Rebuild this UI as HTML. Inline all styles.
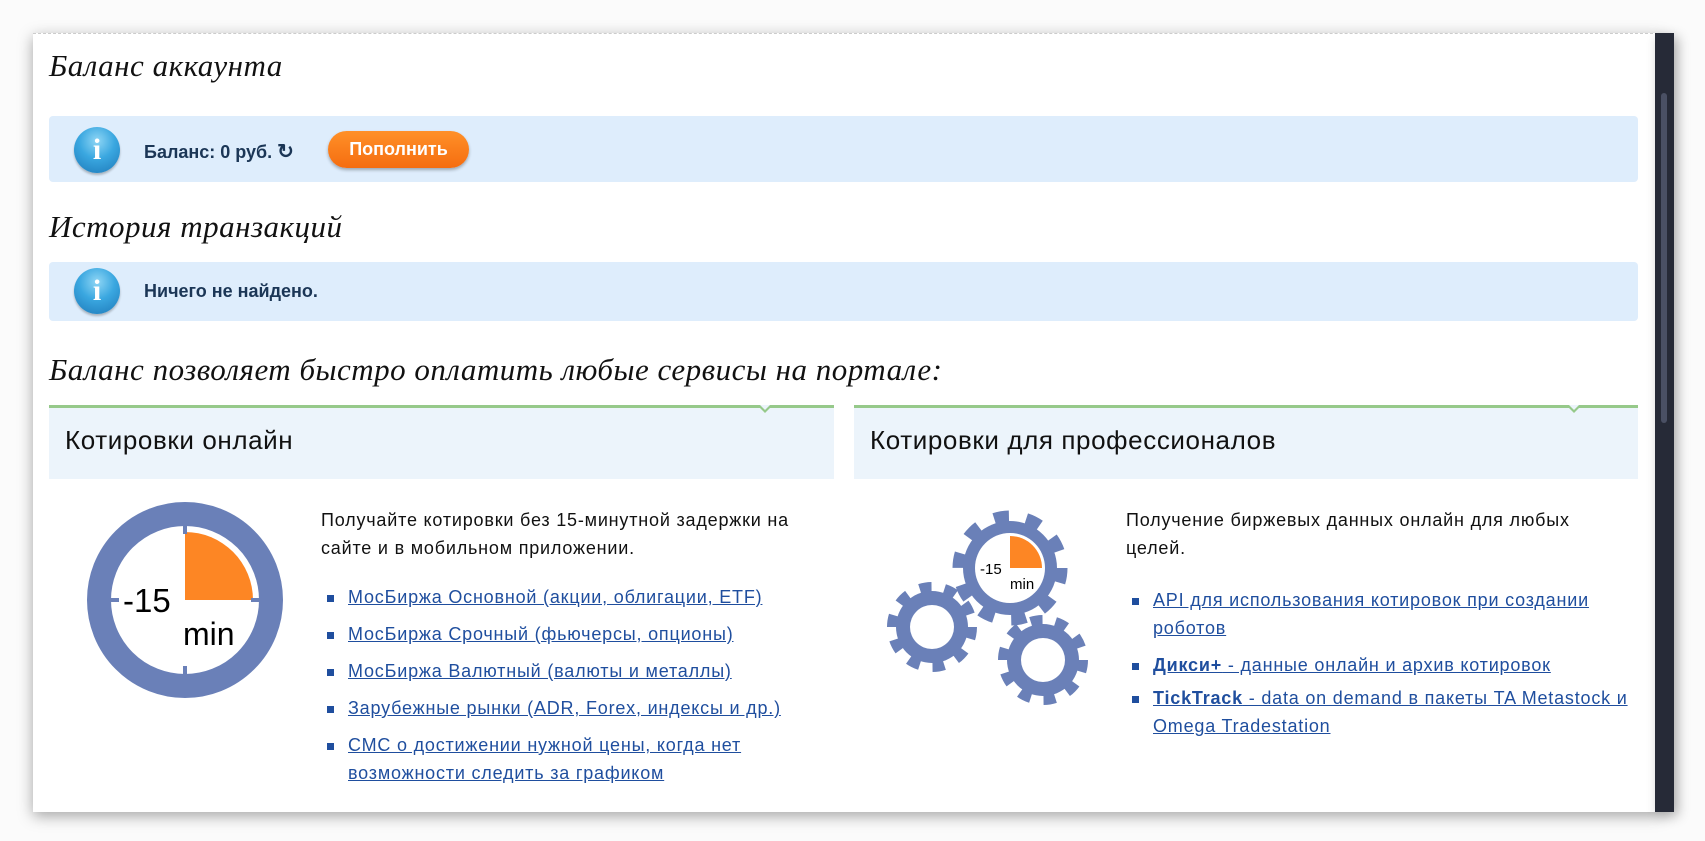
<!DOCTYPE html>
<html><head><meta charset="utf-8"><style>
*{margin:0;padding:0;box-sizing:border-box}
body{width:1705px;height:841px;background:#fbfbfb;position:relative;overflow:hidden;font-family:"Liberation Sans",sans-serif}
.card{position:absolute;left:33px;top:33px;width:1630px;height:779px;background:#fff;box-shadow:0 4px 14px rgba(0,0,0,.35);border-top:1px dashed #ccc}
.sb{position:absolute;left:1655px;top:33px;width:19px;height:779px;background:#262a37;box-shadow:4px 4px 12px rgba(0,0,0,.3)}
.thumb{position:absolute;left:6px;top:60px;width:6px;height:330px;background:#4a5064;border-radius:3px}
.h{position:absolute;font-family:"Liberation Serif",serif;font-style:italic;font-size:31px;letter-spacing:0.5px;color:#111;left:49px}
.info{position:absolute;left:49px;width:1589px;background:#deedfc;border-radius:4px}
.ic{position:absolute;left:25px;width:46px;height:46px;border-radius:50%;background:radial-gradient(circle at 50% 30%,#8fd6f5 0%,#3aa7e0 45%,#1d78b8 100%);box-shadow:0 2px 2px rgba(0,0,0,.25);color:#fff;font:bold 30px "Liberation Serif",serif;text-align:center;line-height:46px}
.it{position:absolute;left:95px;font-weight:bold;font-size:18px;color:#1b3656}
.btn{position:absolute;left:328px;top:131px;width:141px;height:37px;border-radius:19px;background:linear-gradient(#ff9028,#f56d10);color:#fff;font-weight:bold;font-size:18px;text-align:center;line-height:36px;box-shadow:0 2px 3px rgba(0,0,0,.3)}
.ph{position:absolute;top:405px;height:74px;background:#ecf4fb;border-top:3px solid #96c98a}
.ph span{position:absolute;left:16px;top:17px;font-size:26px;letter-spacing:0.6px;color:#111}
.chev{position:absolute;top:-3px;width:16px;height:10px}
.txt{position:absolute;font-size:18px;letter-spacing:0.8px;line-height:28px;color:#111}
ul{list-style:none;position:absolute;font-size:18px;letter-spacing:0.8px;line-height:28px}
li{position:relative;padding-left:27px;margin-bottom:9px}
li:before{content:"";position:absolute;left:6px;top:12px;width:7px;height:7px;background:#1f4e9e}
a{color:#1f4e9e;text-decoration:underline}
</style></head><body>
<div class="card"></div>
<div class="sb"><div class="thumb"></div></div>
<div class="h" style="top:48px">Баланс аккаунта</div>
<div class="info" style="top:116px;height:66px"><div class="ic" style="top:11px">i</div><div class="it" style="top:23px">Баланс: 0 руб. <span style="font-size:20px">↻</span></div></div>
<div class="btn">Пополнить</div>
<div class="h" style="top:209px">История транзакций</div>
<div class="info" style="top:262px;height:59px"><div class="ic" style="top:6px">i</div><div class="it" style="top:19px">Ничего не найдено.</div></div>
<div class="h" style="top:352px">Баланс позволяет быстро оплатить любые сервисы на портале:</div>

<div class="ph" style="left:49px;width:785px"><span>Котировки онлайн</span>
<svg class="chev" style="left:708px" viewBox="0 0 16 10"><path d="M0 0 L8 8 L16 0 Z" fill="#96c98a"/><path d="M3 0 L8 5 L13 0Z" fill="#ecf4fb"/></svg></div>
<div class="ph" style="left:854px;width:784px"><span>Котировки для профессионалов</span>
<svg class="chev" style="left:712px" viewBox="0 0 16 10"><path d="M0 0 L8 8 L16 0 Z" fill="#96c98a"/><path d="M3 0 L8 5 L13 0Z" fill="#ecf4fb"/></svg></div>

<svg style="position:absolute;left:78px;top:495px" width="215" height="215" viewBox="0 0 215 215">
<g transform="translate(107,105)">
<circle r="86" fill="none" stroke="#6a80b8" stroke-width="24"/>
<path d="M0 0 V-68 A68 68 0 0 1 68 0 Z" fill="#fd8624"/>
<path d="M58 -52 h12 v-10 h-12z" fill="#6a80b8"/>
<rect x="-2" y="-76" width="4" height="10" fill="#6a80b8"/><rect x="-2" y="66" width="4" height="10" fill="#6a80b8"/>
<rect x="-76" y="-2" width="10" height="4" fill="#6a80b8"/><rect x="66" y="-2" width="10" height="4" fill="#6a80b8"/>
<text x="-62" y="12" font-family="Liberation Sans" font-size="33" fill="#000">-15</text>
<text x="-2" y="45" font-family="Liberation Sans" font-size="32" fill="#000">min</text>
</g></svg>

<div class="txt" style="left:321px;top:506px">Получайте котировки без 15-минутной задержки на<br>сайте и в мобильном приложении.</div>
<ul style="left:321px;top:583px;width:480px">
<li><a>МосБиржа Основной (акции, облигации, ETF)</a></li>
<li><a>МосБиржа Срочный (фьючерсы, опционы)</a></li>
<li><a>МосБиржа Валютный (валюты и металлы)</a></li>
<li><a>Зарубежные рынки (ADR, Forex, индексы и др.)</a></li>
<li><a>СМС о достижении нужной цены, когда нет возможности следить за графиком</a></li>
</ul>

<svg style="position:absolute;left:880px;top:490px" width="230" height="230" viewBox="0 0 230 230">
<g fill="#6a80b8" stroke="#6a80b8">
<g transform="translate(130,78)"><circle r="47" stroke="none"/><circle r="52" fill="none" stroke-width="11" stroke-dasharray="15 17.67"/><circle r="35" fill="#fff" stroke="none"/>
<path d="M0 0 V-32 A32 32 0 0 1 32 0Z" fill="#fd8624" stroke="none"/>
<text x="-30" y="6" font-family="Liberation Sans" font-size="15" fill="#000" stroke="none">-15</text>
<text x="0" y="21" font-family="Liberation Sans" font-size="15" fill="#000" stroke="none">min</text></g>
<g transform="translate(52,137)"><circle r="36" stroke="none"/><circle r="40" fill="none" stroke-width="10" stroke-dasharray="12 13.1"/><circle r="22" fill="#fff" stroke="none"/></g>
<g transform="translate(163,170)"><circle r="36" stroke="none"/><circle r="40" fill="none" stroke-width="10" stroke-dasharray="12 13.1"/><circle r="22" fill="#fff" stroke="none"/></g>
</g></svg>

<div class="txt" style="left:1126px;top:506px">Получение биржевых данных онлайн для любых<br>целей.</div>
<ul style="left:1126px;top:586px;width:515px">
<li><a>API для использования котировок при создании роботов</a></li>
<li><a><b>Дикси+</b> - данные онлайн и архив котировок</a></li>
<li style="margin-top:-4px"><a><b>TickTrack</b> - data on demand в пакеты TA Metastock и Omega Tradestation</a></li>
</ul>
</body></html>
